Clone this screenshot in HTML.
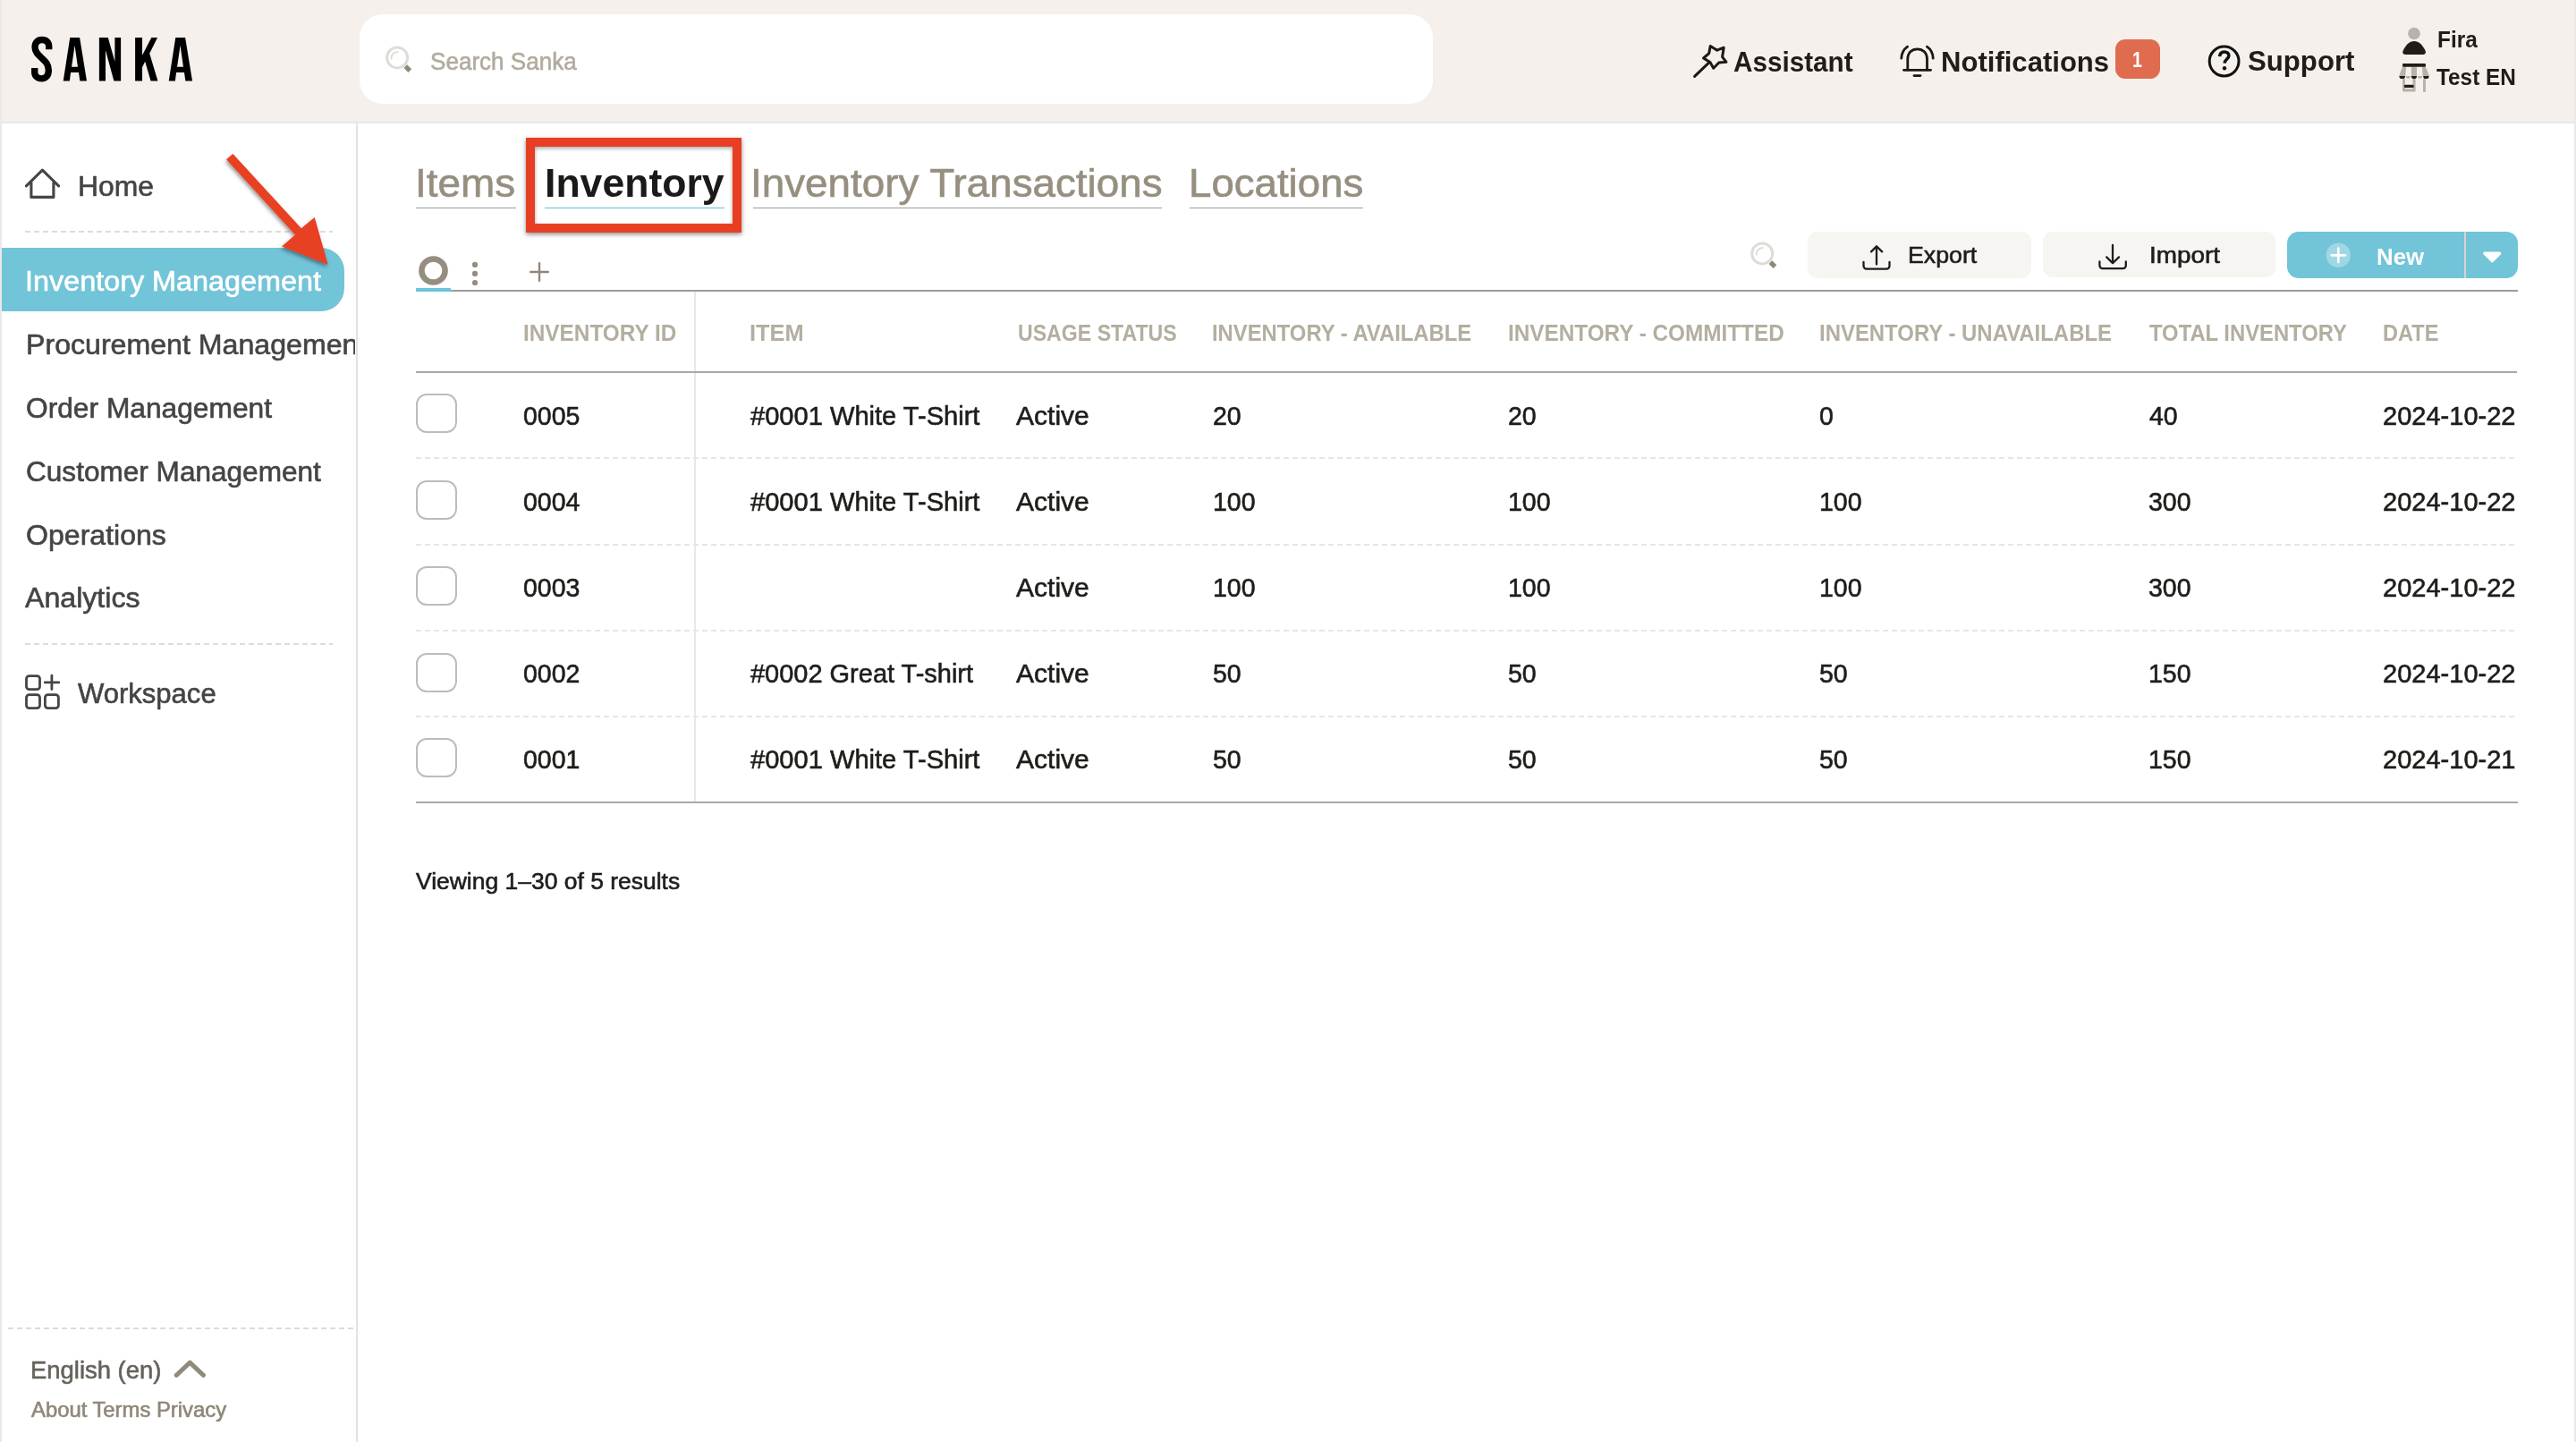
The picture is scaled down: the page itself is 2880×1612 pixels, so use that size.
<!DOCTYPE html><html><head><meta charset="utf-8"><title>Sanka</title><style>
html,body{margin:0;padding:0;}
body{width:2880px;height:1612px;position:relative;overflow:hidden;background:#fff;font-family:"Liberation Sans", sans-serif;}
.t{position:absolute;white-space:nowrap;transform-origin:0 0;}
.b{position:absolute;box-sizing:border-box;}
svg{position:absolute;overflow:visible;}
</style></head><body>
<div class="b" style="left:0px;top:0px;width:2px;height:1612px;background:#e9e9e9;"></div>
<div class="b" style="left:2878px;top:0px;width:2px;height:1612px;background:#e9e9e9;"></div>
<div class="b" style="left:2px;top:0px;width:2876px;height:136px;background:#f5f0eb;"></div>
<div class="b" style="left:2px;top:136px;width:2876px;height:2px;background:#e8e8e8;"></div>
<div class="b" style="left:402px;top:16px;width:1200px;height:100px;background:#fff;border-radius:26px;"></div>
<div id="search" class="t" style="left:480.84px;top:54.50px;font-size:28px;line-height:28px;color:#b0ab9d;font-weight:400;transform:scaleX(0.9312);-webkit-text-stroke:0.6px #b0ab9d;">Search Sanka</div>
<div id="assistant" class="t" style="left:1937.92px;top:52.50px;font-size:32px;line-height:32px;color:#1f1d1a;font-weight:700;transform:scaleX(0.9269);">Assistant</div>
<div id="notifications" class="t" style="left:2170.16px;top:52.50px;font-size:32px;line-height:32px;color:#1f1d1a;font-weight:700;transform:scaleX(0.9707);">Notifications</div>
<div class="b" style="left:2365px;top:44px;width:50px;height:44px;background:#e06c50;border-radius:11px;"></div>
<div id="badge1" class="t" style="left:2384.35px;top:56.25px;font-size:23.5px;line-height:23.5px;color:#fff;font-weight:700;transform:scaleX(0.8333);">1</div>
<div id="support" class="t" style="left:2513.38px;top:52.00px;font-size:32px;line-height:32px;color:#1f1d1a;font-weight:700;transform:scaleX(0.9740);">Support</div>
<div id="fira" class="t" style="left:2724.68px;top:30.75px;font-size:26.5px;line-height:26.5px;color:#1f1d1a;font-weight:700;transform:scaleX(0.9213);">Fira</div>
<div id="testen" class="t" style="left:2723.67px;top:72.75px;font-size:26.5px;line-height:26.5px;color:#1f1d1a;font-weight:700;transform:scaleX(0.9189);">Test EN</div>
<div class="b" style="left:398px;top:138px;width:2px;height:1474px;background:#e3e3e3;"></div>
<div id="home" class="t" style="left:86.94px;top:192.55px;font-size:31px;line-height:31px;color:#444444;font-weight:400;transform:scaleX(1.0275);-webkit-text-stroke:0.6px #444444;">Home</div>
<div class="b" style="left:28px;top:258px;width:344px;height:2px;background:repeating-linear-gradient(90deg,#dcdcdc 0 6px,transparent 6px 10px);"></div>
<div class="b" style="left:2px;top:277px;width:383px;height:70.5px;background:#72c4d8;border-radius:0 26px 26px 0;"></div>
<div id="invmgmt" class="t" style="left:28.29px;top:298.55px;font-size:31px;line-height:31px;color:#fff;font-weight:400;transform:scaleX(1.0437);-webkit-text-stroke:0.6px #fff;">Inventory Management</div>
<div class="b" style="left:0px;top:350px;width:396.5px;height:60px;overflow:hidden;">
<div id="procmgmt" class="t" style="left:28.61px;top:19.55px;font-size:31px;line-height:31px;color:#444444;font-weight:400;transform:scaleX(1.0363);-webkit-text-stroke:0.6px #444444;">Procurement Management</div>
</div>
<div id="ordermgmt" class="t" style="left:28.87px;top:440.55px;font-size:31px;line-height:31px;color:#444444;font-weight:400;transform:scaleX(1.0231);-webkit-text-stroke:0.6px #444444;">Order Management</div>
<div id="custmgmt" class="t" style="left:28.87px;top:511.55px;font-size:31px;line-height:31px;color:#444444;font-weight:400;transform:scaleX(1.0182);-webkit-text-stroke:0.6px #444444;">Customer Management</div>
<div id="operations" class="t" style="left:28.85px;top:582.55px;font-size:31px;line-height:31px;color:#444444;font-weight:400;transform:scaleX(1.0347);-webkit-text-stroke:0.6px #444444;">Operations</div>
<div id="analytics" class="t" style="left:27.98px;top:652.55px;font-size:31px;line-height:31px;color:#444444;font-weight:400;transform:scaleX(1.0363);-webkit-text-stroke:0.6px #444444;">Analytics</div>
<div class="b" style="left:28px;top:719px;width:344px;height:2px;background:repeating-linear-gradient(90deg,#dcdcdc 0 6px,transparent 6px 10px);"></div>
<div id="workspace" class="t" style="left:87.00px;top:759.75px;font-size:31px;line-height:31px;color:#444444;font-weight:400;transform:scaleX(1.0010);-webkit-text-stroke:0.6px #444444;">Workspace</div>
<div class="b" style="left:9px;top:1484px;width:387px;height:2px;background:repeating-linear-gradient(90deg,#dcdcdc 0 6px,transparent 6px 10px);"></div>
<div id="english" class="t" style="left:34.04px;top:1517.70px;font-size:28px;line-height:28px;color:#66625a;font-weight:400;transform:scaleX(0.9795);-webkit-text-stroke:0.6px #66625a;">English (en)</div>
<div id="about" class="t" style="left:35.00px;top:1565.20px;font-size:23.4px;line-height:23.4px;color:#8f8778;font-weight:400;transform:scaleX(1.0187);-webkit-text-stroke:0.6px #8f8778;">About Terms Privacy</div>
<div id="tab_items" class="t" style="left:464.29px;top:183.85px;font-size:43.5px;line-height:43.5px;color:#968f80;font-weight:400;transform:scaleX(1.0535);-webkit-text-stroke:0.6px #968f80;">Items</div>
<div class="b" style="left:465px;top:232px;width:112px;height:1px;background:#9d9d9d;"></div>
<div id="tab_inv" class="t" style="left:608.73px;top:183.85px;font-size:43.5px;line-height:43.5px;color:#1b1a18;font-weight:700;transform:scaleX(1.0244);">Inventory</div>
<div class="b" style="left:609px;top:232px;width:201px;height:1px;background:#62c0d8;"></div>
<div id="tab_trans" class="t" style="left:838.79px;top:183.85px;font-size:43.5px;line-height:43.5px;color:#968f80;font-weight:400;transform:scaleX(1.0524);-webkit-text-stroke:0.6px #968f80;">Inventory Transactions</div>
<div class="b" style="left:842px;top:232px;width:457px;height:1px;background:#9d9d9d;"></div>
<div id="tab_loc" class="t" style="left:1329.03px;top:183.85px;font-size:43.5px;line-height:43.5px;color:#968f80;font-weight:400;transform:scaleX(1.0489);-webkit-text-stroke:0.6px #968f80;">Locations</div>
<div class="b" style="left:1330px;top:232px;width:194px;height:1px;background:#9d9d9d;"></div>
<div class="b" style="left:588px;top:154px;width:241px;height:105.5px;border:10px solid #e83f24;box-shadow:0 2px 5px rgba(0,0,0,.45), inset 0 2px 4px rgba(0,0,0,.35);"></div>
<div class="b" style="left:465px;top:324px;width:2350px;height:2px;background:#9c9c9c;"></div>
<div class="b" style="left:465px;top:322px;width:39px;height:4px;background:#6cc4d9;"></div>
<svg style="left:460px;top:280px" width="170" height="45" viewBox="460 280 170 45"><circle cx="484.5" cy="302.5" r="13.1" fill="none" stroke="#958d7f" stroke-width="6.5"/><circle cx="531" cy="295.9" r="3.1" fill="#958d7f"/><circle cx="531" cy="305.9" r="3.1" fill="#958d7f"/><circle cx="531" cy="316" r="3.1" fill="#958d7f"/><path d="M593.2 304H612.8M603 294.2V313.8" stroke="#8f8778" stroke-width="2.4" stroke-linecap="round" fill="none"/></svg>
<div class="b" style="left:2021px;top:259px;width:250px;height:52px;background:#f6f5f1;border-radius:11px;"></div>
<div id="export" class="t" style="left:2132.98px;top:273.25px;font-size:25.5px;line-height:25.5px;color:#1f1d1a;font-weight:400;transform:scaleX(1.0486);-webkit-text-stroke:0.6px #1f1d1a;">Export</div>
<div class="b" style="left:2284px;top:259px;width:260px;height:51px;background:#f6f5f1;border-radius:11px;"></div>
<div id="import" class="t" style="left:2403.31px;top:273.25px;font-size:25.5px;line-height:25.5px;color:#1f1d1a;font-weight:400;transform:scaleX(1.0930);-webkit-text-stroke:0.6px #1f1d1a;">Import</div>
<div class="b" style="left:2557px;top:259px;width:258px;height:52px;background:#72c4d8;border-radius:13px;"></div>
<div class="b" style="left:2755px;top:259px;width:2px;height:52px;background:#d6d3ca;"></div>
<div id="new" class="t" style="left:2656.52px;top:274.00px;font-size:26px;line-height:26px;color:#fff;font-weight:700;transform:scaleX(0.9923);">New</div>
<div class="b" style="left:776px;top:326px;width:2px;height:570px;background:#e7e7e7;"></div>
<div class="b" style="left:465px;top:415px;width:2349px;height:2px;background:#a8a8a8;"></div>
<div class="b" style="left:465px;top:895.5px;width:2350px;height:2px;background:#a8a8a8;"></div>
<div class="b" style="left:465px;top:511px;width:2350px;height:2px;background:repeating-linear-gradient(90deg,#e6e6e6 0 6px,transparent 6px 10px);"></div>
<div class="b" style="left:465px;top:608px;width:2350px;height:2px;background:repeating-linear-gradient(90deg,#e6e6e6 0 6px,transparent 6px 10px);"></div>
<div class="b" style="left:465px;top:704px;width:2350px;height:2px;background:repeating-linear-gradient(90deg,#e6e6e6 0 6px,transparent 6px 10px);"></div>
<div class="b" style="left:465px;top:800px;width:2350px;height:2px;background:repeating-linear-gradient(90deg,#e6e6e6 0 6px,transparent 6px 10px);"></div>
<div id="h_id" class="t" style="left:585.26px;top:358.75px;font-size:26.5px;line-height:26.5px;color:#b3ae9f;font-weight:700;transform:scaleX(0.9185);">INVENTORY ID</div>
<div id="h_item" class="t" style="left:838.20px;top:358.75px;font-size:26.5px;line-height:26.5px;color:#b3ae9f;font-weight:700;transform:scaleX(0.9583);">ITEM</div>
<div id="h_usage" class="t" style="left:1137.76px;top:358.75px;font-size:26.5px;line-height:26.5px;color:#b3ae9f;font-weight:700;transform:scaleX(0.8725);">USAGE STATUS</div>
<div id="h_avail" class="t" style="left:1355.35px;top:358.75px;font-size:26.5px;line-height:26.5px;color:#b3ae9f;font-weight:700;transform:scaleX(0.8984);">INVENTORY - AVAILABLE</div>
<div id="h_comm" class="t" style="left:1685.79px;top:358.75px;font-size:26.5px;line-height:26.5px;color:#b3ae9f;font-weight:700;transform:scaleX(0.9169);">INVENTORY - COMMITTED</div>
<div id="h_unav" class="t" style="left:2034.29px;top:358.75px;font-size:26.5px;line-height:26.5px;color:#b3ae9f;font-weight:700;transform:scaleX(0.9028);">INVENTORY - UNAVAILABLE</div>
<div id="h_total" class="t" style="left:2403.10px;top:358.75px;font-size:26.5px;line-height:26.5px;color:#b3ae9f;font-weight:700;transform:scaleX(0.8984);">TOTAL INVENTORY</div>
<div id="h_date" class="t" style="left:2663.85px;top:358.75px;font-size:26.5px;line-height:26.5px;color:#b3ae9f;font-weight:700;transform:scaleX(0.8888);">DATE</div>
<div class="b" style="left:465px;top:440px;width:46px;height:44px;border:2px solid #bcbcbc;border-radius:12px;background:#fff;"></div>
<div id="r0c0" class="t" style="left:585.12px;top:450.50px;font-size:29px;line-height:29px;color:#1f1d1a;font-weight:400;transform:scaleX(0.9825);-webkit-text-stroke:0.6px #1f1d1a;">0005</div>
<div id="r0c1" class="t" style="left:838.60px;top:450.50px;font-size:29px;line-height:29px;color:#1f1d1a;font-weight:400;transform:scaleX(1.0027);-webkit-text-stroke:0.6px #1f1d1a;">#0001 White T-Shirt</div>
<div id="r0c2" class="t" style="left:1136.28px;top:450.50px;font-size:29px;line-height:29px;color:#1f1d1a;font-weight:400;transform:scaleX(1.0359);-webkit-text-stroke:0.6px #1f1d1a;">Active</div>
<div id="r0c3" class="t" style="left:1356.12px;top:450.50px;font-size:29px;line-height:29px;color:#1f1d1a;font-weight:400;transform:scaleX(0.9825);-webkit-text-stroke:0.6px #1f1d1a;">20</div>
<div id="r0c4" class="t" style="left:1686.13px;top:450.50px;font-size:29px;line-height:29px;color:#1f1d1a;font-weight:400;transform:scaleX(0.9825);-webkit-text-stroke:0.6px #1f1d1a;">20</div>
<div id="r0c5" class="t" style="left:2034.13px;top:450.50px;font-size:29px;line-height:29px;color:#1f1d1a;font-weight:400;transform:scaleX(0.9825);-webkit-text-stroke:0.6px #1f1d1a;">0</div>
<div id="r0c6" class="t" style="left:2403.10px;top:450.50px;font-size:29px;line-height:29px;color:#1f1d1a;font-weight:400;transform:scaleX(0.9825);-webkit-text-stroke:0.6px #1f1d1a;">40</div>
<div id="r0c7" class="t" style="left:2664.10px;top:450.50px;font-size:29px;line-height:29px;color:#1f1d1a;font-weight:400;transform:scaleX(1.0010);-webkit-text-stroke:0.6px #1f1d1a;">2024-10-22</div>
<div class="b" style="left:465px;top:537px;width:46px;height:44px;border:2px solid #bcbcbc;border-radius:12px;background:#fff;"></div>
<div id="r1c0" class="t" style="left:585.12px;top:546.50px;font-size:29px;line-height:29px;color:#1f1d1a;font-weight:400;transform:scaleX(0.9825);-webkit-text-stroke:0.6px #1f1d1a;">0004</div>
<div id="r1c1" class="t" style="left:838.60px;top:546.50px;font-size:29px;line-height:29px;color:#1f1d1a;font-weight:400;transform:scaleX(1.0027);-webkit-text-stroke:0.6px #1f1d1a;">#0001 White T-Shirt</div>
<div id="r1c2" class="t" style="left:1136.28px;top:546.50px;font-size:29px;line-height:29px;color:#1f1d1a;font-weight:400;transform:scaleX(1.0359);-webkit-text-stroke:0.6px #1f1d1a;">Active</div>
<div id="r1c3" class="t" style="left:1355.63px;top:546.50px;font-size:29px;line-height:29px;color:#1f1d1a;font-weight:400;transform:scaleX(0.9825);-webkit-text-stroke:0.6px #1f1d1a;">100</div>
<div id="r1c4" class="t" style="left:1685.64px;top:546.50px;font-size:29px;line-height:29px;color:#1f1d1a;font-weight:400;transform:scaleX(0.9825);-webkit-text-stroke:0.6px #1f1d1a;">100</div>
<div id="r1c5" class="t" style="left:2033.64px;top:546.50px;font-size:29px;line-height:29px;color:#1f1d1a;font-weight:400;transform:scaleX(0.9825);-webkit-text-stroke:0.6px #1f1d1a;">100</div>
<div id="r1c6" class="t" style="left:2402.12px;top:546.50px;font-size:29px;line-height:29px;color:#1f1d1a;font-weight:400;transform:scaleX(0.9825);-webkit-text-stroke:0.6px #1f1d1a;">300</div>
<div id="r1c7" class="t" style="left:2664.10px;top:546.50px;font-size:29px;line-height:29px;color:#1f1d1a;font-weight:400;transform:scaleX(1.0010);-webkit-text-stroke:0.6px #1f1d1a;">2024-10-22</div>
<div class="b" style="left:465px;top:633px;width:46px;height:44px;border:2px solid #bcbcbc;border-radius:12px;background:#fff;"></div>
<div id="r2c0" class="t" style="left:585.12px;top:642.50px;font-size:29px;line-height:29px;color:#1f1d1a;font-weight:400;transform:scaleX(0.9825);-webkit-text-stroke:0.6px #1f1d1a;">0003</div>
<div id="r2c2" class="t" style="left:1136.28px;top:642.50px;font-size:29px;line-height:29px;color:#1f1d1a;font-weight:400;transform:scaleX(1.0359);-webkit-text-stroke:0.6px #1f1d1a;">Active</div>
<div id="r2c3" class="t" style="left:1355.63px;top:642.50px;font-size:29px;line-height:29px;color:#1f1d1a;font-weight:400;transform:scaleX(0.9825);-webkit-text-stroke:0.6px #1f1d1a;">100</div>
<div id="r2c4" class="t" style="left:1685.64px;top:642.50px;font-size:29px;line-height:29px;color:#1f1d1a;font-weight:400;transform:scaleX(0.9825);-webkit-text-stroke:0.6px #1f1d1a;">100</div>
<div id="r2c5" class="t" style="left:2033.64px;top:642.50px;font-size:29px;line-height:29px;color:#1f1d1a;font-weight:400;transform:scaleX(0.9825);-webkit-text-stroke:0.6px #1f1d1a;">100</div>
<div id="r2c6" class="t" style="left:2402.12px;top:642.50px;font-size:29px;line-height:29px;color:#1f1d1a;font-weight:400;transform:scaleX(0.9825);-webkit-text-stroke:0.6px #1f1d1a;">300</div>
<div id="r2c7" class="t" style="left:2664.10px;top:642.50px;font-size:29px;line-height:29px;color:#1f1d1a;font-weight:400;transform:scaleX(1.0010);-webkit-text-stroke:0.6px #1f1d1a;">2024-10-22</div>
<div class="b" style="left:465px;top:730px;width:46px;height:44px;border:2px solid #bcbcbc;border-radius:12px;background:#fff;"></div>
<div id="r3c0" class="t" style="left:585.12px;top:738.50px;font-size:29px;line-height:29px;color:#1f1d1a;font-weight:400;transform:scaleX(0.9825);-webkit-text-stroke:0.6px #1f1d1a;">0002</div>
<div id="r3c1" class="t" style="left:838.60px;top:738.50px;font-size:29px;line-height:29px;color:#1f1d1a;font-weight:400;transform:scaleX(0.9988);-webkit-text-stroke:0.6px #1f1d1a;">#0002 Great T-shirt</div>
<div id="r3c2" class="t" style="left:1136.28px;top:738.50px;font-size:29px;line-height:29px;color:#1f1d1a;font-weight:400;transform:scaleX(1.0359);-webkit-text-stroke:0.6px #1f1d1a;">Active</div>
<div id="r3c3" class="t" style="left:1356.12px;top:738.50px;font-size:29px;line-height:29px;color:#1f1d1a;font-weight:400;transform:scaleX(0.9825);-webkit-text-stroke:0.6px #1f1d1a;">50</div>
<div id="r3c4" class="t" style="left:1686.13px;top:738.50px;font-size:29px;line-height:29px;color:#1f1d1a;font-weight:400;transform:scaleX(0.9825);-webkit-text-stroke:0.6px #1f1d1a;">50</div>
<div id="r3c5" class="t" style="left:2034.13px;top:738.50px;font-size:29px;line-height:29px;color:#1f1d1a;font-weight:400;transform:scaleX(0.9825);-webkit-text-stroke:0.6px #1f1d1a;">50</div>
<div id="r3c6" class="t" style="left:2401.63px;top:738.50px;font-size:29px;line-height:29px;color:#1f1d1a;font-weight:400;transform:scaleX(0.9825);-webkit-text-stroke:0.6px #1f1d1a;">150</div>
<div id="r3c7" class="t" style="left:2664.10px;top:738.50px;font-size:29px;line-height:29px;color:#1f1d1a;font-weight:400;transform:scaleX(1.0010);-webkit-text-stroke:0.6px #1f1d1a;">2024-10-22</div>
<div class="b" style="left:465px;top:825px;width:46px;height:44px;border:2px solid #bcbcbc;border-radius:12px;background:#fff;"></div>
<div id="r4c0" class="t" style="left:585.12px;top:834.50px;font-size:29px;line-height:29px;color:#1f1d1a;font-weight:400;transform:scaleX(0.9825);-webkit-text-stroke:0.6px #1f1d1a;">0001</div>
<div id="r4c1" class="t" style="left:838.60px;top:834.50px;font-size:29px;line-height:29px;color:#1f1d1a;font-weight:400;transform:scaleX(1.0027);-webkit-text-stroke:0.6px #1f1d1a;">#0001 White T-Shirt</div>
<div id="r4c2" class="t" style="left:1136.28px;top:834.50px;font-size:29px;line-height:29px;color:#1f1d1a;font-weight:400;transform:scaleX(1.0359);-webkit-text-stroke:0.6px #1f1d1a;">Active</div>
<div id="r4c3" class="t" style="left:1356.12px;top:834.50px;font-size:29px;line-height:29px;color:#1f1d1a;font-weight:400;transform:scaleX(0.9825);-webkit-text-stroke:0.6px #1f1d1a;">50</div>
<div id="r4c4" class="t" style="left:1686.13px;top:834.50px;font-size:29px;line-height:29px;color:#1f1d1a;font-weight:400;transform:scaleX(0.9825);-webkit-text-stroke:0.6px #1f1d1a;">50</div>
<div id="r4c5" class="t" style="left:2034.13px;top:834.50px;font-size:29px;line-height:29px;color:#1f1d1a;font-weight:400;transform:scaleX(0.9825);-webkit-text-stroke:0.6px #1f1d1a;">50</div>
<div id="r4c6" class="t" style="left:2401.63px;top:834.50px;font-size:29px;line-height:29px;color:#1f1d1a;font-weight:400;transform:scaleX(0.9825);-webkit-text-stroke:0.6px #1f1d1a;">150</div>
<div id="r4c7" class="t" style="left:2664.10px;top:834.50px;font-size:29px;line-height:29px;color:#1f1d1a;font-weight:400;transform:scaleX(1.0010);-webkit-text-stroke:0.6px #1f1d1a;">2024-10-21</div>
<div id="viewing" class="t" style="left:465.00px;top:971.50px;font-size:26.5px;line-height:26.5px;color:#1f1d1a;font-weight:400;transform:scaleX(0.9983);-webkit-text-stroke:0.6px #1f1d1a;">Viewing 1&ndash;30 of 5 results</div>
<svg style="left:0;top:0" width="2880" height="1612" viewBox="0 0 2880 1612">
<g transform="translate(24 30) scale(0.079195)" fill="#000">
<path fill="none" stroke="#000" stroke-width="93" d="M388 318V275C388 215 350 183 290 183C225 183 190 222 190 288C190 360 240 400 290 445C340 490 383 530 383 612C383 690 345 730 285 730C225 730 186 695 186 640V580"/>
<path fill-rule="evenodd" d="M685 150H822L922 765H825L808 645H695L680 765H590ZM752 262L708 565H795Z"/>
<path d="M1097 150H1222L1318 490V150H1403V765H1305L1187 330V765H1097Z"/>
<path d="M1605 150H1705V400L1835 150H1920L1808 375L1925 765H1825L1745 490L1705 570V765H1605Z"/>
<path fill-rule="evenodd" transform="translate(1490 0)" d="M685 150H822L922 765H825L808 645H695L680 765H590ZM752 262L708 565H795Z"/>
</g>
<g transform="translate(0 0)" fill="none"><circle cx="444.1" cy="64.4" r="11.5" stroke="#dddcd7" stroke-width="3"/><path d="M437.6 65.6A7 7 0 0 1 444.6 57.9" stroke="#dddcd7" stroke-width="2" stroke-linecap="round"/><path d="M453.3 74.1L458.3 79.1" stroke="#8f887a" stroke-width="5.2"/></g>
<g transform="translate(1526.1 219.0)" fill="none"><circle cx="444.1" cy="64.4" r="11.5" stroke="#dddcd7" stroke-width="3"/><path d="M437.6 65.6A7 7 0 0 1 444.6 57.9" stroke="#dddcd7" stroke-width="2" stroke-linecap="round"/><path d="M453.3 74.1L458.3 79.1" stroke="#8f887a" stroke-width="5.2"/></g>
<g fill="none" stroke="#1a1917" stroke-width="3" stroke-linecap="round" stroke-linejoin="round"><path d="M1894.6 85.4L1910.5 70.2"/><path d="M1912.2 51.4L1919.8 56.2L1927.2 53.2L1925.6 63.6L1930 69.3L1921.8 70L1915.7 76.2L1911.9 69.6L1904.5 65L1910.7 59.6Z"/></g>
<g fill="none" stroke="#1a1917" stroke-width="2.8" stroke-linecap="round" stroke-linejoin="round"><path d="M2128.5 78.3H2158.5"/><path d="M2132.8 78V66.5C2132.8 59 2137.5 54.8 2143.6 54.8C2149.8 54.8 2154.5 59 2154.5 66.5V78"/><path d="M2140 84.6H2147"/><path d="M2132.6 52.2C2128.6 55 2126 59.5 2125.8 65.2"/><path d="M2154.4 52.2C2158.4 55 2161 59.5 2161.2 65.2"/></g>
<circle cx="2486.6" cy="68.5" r="16.4" fill="none" stroke="#111" stroke-width="3"/>
<path d="M2481.6 63.2C2481.8 59.6 2484 57.9 2486.9 57.9C2489.9 57.9 2491.9 59.7 2491.9 62.2C2491.9 65.6 2487.3 66.4 2487.1 70.6" fill="none" stroke="#111" stroke-width="3.5"/><circle cx="2487" cy="76.3" r="2.2" fill="#111"/>
<circle cx="2699" cy="37.5" r="6.8" fill="#b6b3aa"/>
<path d="M2699.1 46C2704.5 46 2707.5 50 2709.8 53.5C2710.9 55.2 2711.9 56.8 2711.9 58.3C2711.9 60 2710.7 61 2709 61H2689.2C2687.5 61 2686.3 60 2686.3 58.3C2686.3 56.8 2687.3 55.2 2688.4 53.5C2690.7 50 2693.7 46 2699.1 46Z" fill="#1f1d1a"/>
<g><path d="M2686 74.6H2690.1L2689.2 85H2682.2ZM2695.9 74.6H2702V85H2695.9ZM2707.9 74.6H2711.9L2716 85H2708.7Z" fill="#b6b3aa"/><path d="M2689.8 84.9A2.6 2.9 0 0 0 2695 84.9ZM2702.9 84.9A2.6 2.9 0 0 0 2708.1 84.9Z" fill="#b6b3aa"/><path d="M2686 88H2689V99.2H2697.4V88H2700.6V101.2A1.4 1.4 0 0 1 2699.2 102.6H2687.4A1.4 1.4 0 0 1 2686 101.2Z" fill="#b6b3aa"/><rect x="2709" y="87.6" width="3" height="15.4" rx="1.5" fill="#b6b3aa"/><rect x="2686" y="70.9" width="26" height="3.9" rx="1.3" fill="#1f1d1a"/><path d="M2682.4 84.9A3.3 3.2 0 0 0 2689 84.9ZM2695.9 84.9A3.05 3.2 0 0 0 2702 84.9ZM2709.2 84.9A3.2 3.2 0 0 0 2715.6 84.9Z" fill="#1f1d1a"/><rect x="2687.8" y="94.8" width="11" height="3.2" rx="1.5" fill="#1f1d1a"/></g>
<g fill="none" stroke="#454545" stroke-width="3.1" stroke-linejoin="round"><path d="M29.4 207.8L47.4 190.2L65.6 207.8" stroke-linecap="round"/><path d="M34.9 203.5V220.4H59.9V203.5"/></g>
<g fill="none" stroke="#454545" stroke-width="2.8"><rect x="29.5" y="755.6" width="15" height="15" rx="3.2"/><rect x="29.5" y="776.6" width="15" height="15" rx="3.2"/><rect x="50.4" y="776.6" width="15" height="15" rx="3.2"/><path d="M50.2 762.9H65.8M57.9 755.2V770.6" stroke-linecap="round"/></g>
<path d="M197.2 1537.3L212.3 1523.2L227.4 1537.3" fill="none" stroke="#918a7b" stroke-width="5" stroke-linecap="round" stroke-linejoin="round"/>
<g fill="none" stroke="#1f1d1a" stroke-width="2.3" stroke-linecap="round" stroke-linejoin="round"><path d="M2083.5 293V297.3A3.4 3.4 0 0 0 2086.9 300.7H2109.1A3.4 3.4 0 0 0 2112.5 297.3V293"/><path d="M2098 295.6V275.4M2092 281.4L2098 275.4L2104.2 281.4"/><path d="M2347.4 292.4V296.8A3.4 3.4 0 0 0 2350.8 300.2H2373.4A3.4 3.4 0 0 0 2376.8 296.8V292.4"/><path d="M2362 274V294.2M2355.2 287.4L2362 294.2L2369 287.4"/></g>
<circle cx="2614.3" cy="285.3" r="13.7" fill="#fff" fill-opacity=".32"/>
<path d="M2606.6 285.3H2622M2614.3 277.6V293" stroke="#fff" stroke-width="2.7" stroke-linecap="round" fill="none"/>
<path d="M2778 283.2H2794.6L2786.3 291.6Z" fill="#fff" stroke="#fff" stroke-width="3.6" stroke-linejoin="round"/>
<defs><filter id="sh" x="-20%" y="-20%" width="140%" height="140%"><feDropShadow dx="-1" dy="2.5" stdDeviation="2.2" flood-color="#000" flood-opacity=".42"/></filter></defs>
<path filter="url(#sh)" fill="#e83f24" d="M260.4 171.9L336.9 255.2L351.7 242.9L366.8 295.9L315.1 275.4L330 262.5L253.1 178.3Z"/>
</svg>
</body></html>
